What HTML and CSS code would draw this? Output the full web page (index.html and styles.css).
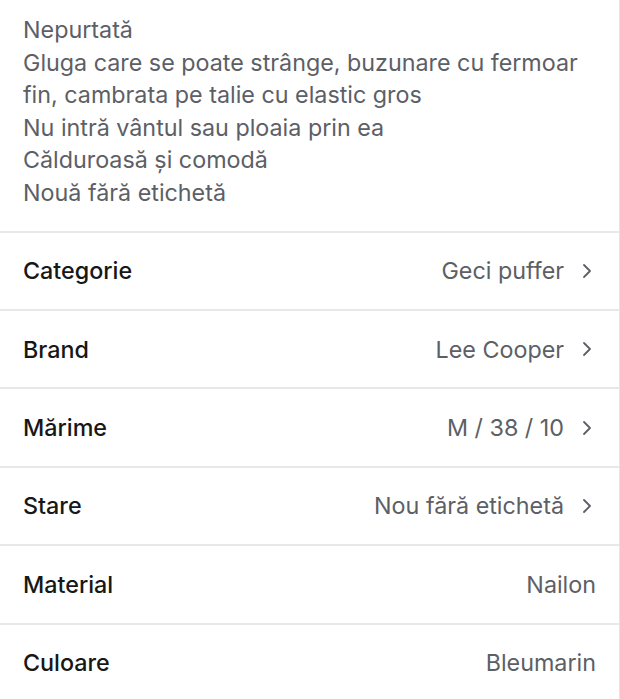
FILE: index.html
```html
<!DOCTYPE html>
<html lang="ro">
<head>
    <meta charset="UTF-8">
    <title>Detalii articol</title>
    <link rel="stylesheet" href="styles.css">
</head>
<body>
    <div class="page">
        <div class="description">
            <p>Nepurtată</p>
            <p>Gluga care se poate strânge, buzunare cu fermoar fin, cambrata pe talie cu elastic gros</p>
            <p>Nu intră vântul sau ploaia prin ea</p>
            <p>Călduroasă și comodă</p>
            <p>Nouă fără etichetă</p>
        </div>

        <ul class="details">
            <li class="row">
                <span class="label">Categorie</span>
                <span class="value">Geci puffer
                    <svg class="chevron" viewBox="0 0 12 16"><path d="M3 2l6 6-6 6"/></svg>
                </span>
            </li>
            <li class="row">
                <span class="label">Brand</span>
                <span class="value">Lee Cooper
                    <svg class="chevron" viewBox="0 0 12 16"><path d="M3 2l6 6-6 6"/></svg>
                </span>
            </li>
            <li class="row">
                <span class="label">Mărime</span>
                <span class="value">M / 38 / 10
                    <svg class="chevron" viewBox="0 0 12 16"><path d="M3 2l6 6-6 6"/></svg>
                </span>
            </li>
            <li class="row">
                <span class="label">Stare</span>
                <span class="value">Nou fără etichetă
                    <svg class="chevron" viewBox="0 0 12 16"><path d="M3 2l6 6-6 6"/></svg>
                </span>
            </li>
            <li class="row">
                <span class="label">Material</span>
                <span class="value">Nailon</span>
            </li>
            <li class="row">
                <span class="label">Culoare</span>
                <span class="value">Bleumarin</span>
            </li>
        </ul>
    </div>
</body>
</html>
```

FILE: styles.css
```css
body { margin: 0; background: #fff; font-family: Inter, "Noto Sans", sans-serif; }
.page { width: 619px; border-right: 1px solid #e4e4e4; min-height: 699px; }

.description { padding: 14px 30px 21px 23px; color: #5c6066; font-size: 23.3px; line-height: 32.6px; }
.description p { margin: 0; }

.details { list-style: none; margin: 0; padding: 0; }
.row {
    display: flex; justify-content: space-between; align-items: center;
    height: 76.4px; padding: 0 23px 0 23px;
    border-top: 2px solid #e8e8e8; font-size: 23.3px;
}
.label { color: #171717; font-weight: 500; }
.value { display: flex; align-items: center; gap: 17px; color: #5c6066; }
.chevron { width: 12px; height: 16px; margin-right: 3px; fill: none; stroke: #5c6066; stroke-width: 1.8; stroke-linecap: round; stroke-linejoin: round; }
```
